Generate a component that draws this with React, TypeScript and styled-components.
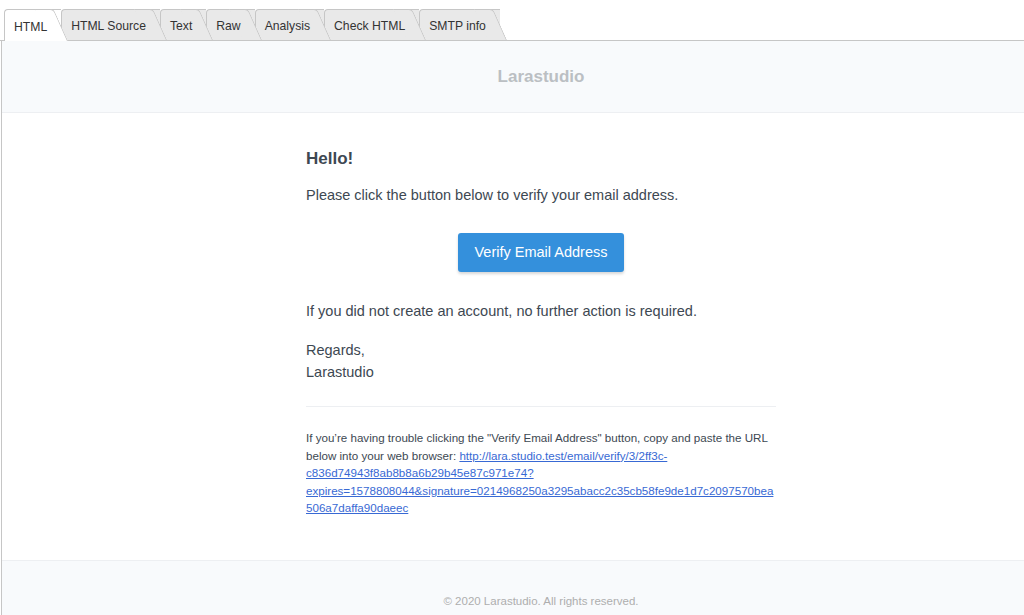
import styled, { createGlobalStyle } from "styled-components";

const TABS = ["HTML", "HTML Source", "Text", "Raw", "Analysis", "Check HTML", "SMTP info"];

const verifyUrl =
  "http://lara.studio.test/email/verify/3/2ff3c-c836d74943f8ab8b8a6b29b45e87c971e74?expires=1578808044&signature=0214968250a3295abacc2c35cb58fe9de1d7c2097570bea506a7daffa90daeec";

const App = () => {
  return (
    <Page>
      <GlobalStyle />
      <TabBar>
        {TABS.map((tab, i) => (
          <Tab key={tab} $active={i === 0} $z={TABS.length - i}>
            {tab}
          </Tab>
        ))}
      </TabBar>
      <Frame>
        <Header>
          <Logo>Larastudio</Logo>
        </Header>
        <Body>
          <Inner>
            <Title>Hello!</Title>
            <Paragraph>Please click the button below to verify your email address.</Paragraph>
            <Action>
              <Button href="#">Verify Email Address</Button>
            </Action>
            <Paragraph>If you did not create an account, no further action is required.</Paragraph>
            <Paragraph>
              Regards,
              <br />
              Larastudio
            </Paragraph>
            <Subcopy>
              If you’re having trouble clicking the "Verify Email Address" button, copy and paste
              the URL below into your web browser: <Link href="#">{verifyUrl}</Link>
            </Subcopy>
          </Inner>
        </Body>
        <Footer>© 2020 Larastudio. All rights reserved.</Footer>
      </Frame>
    </Page>
  );
};

const GlobalStyle = createGlobalStyle`
  html, body {
    margin: 0;
    padding: 0;
    background: #fff;
    overflow: hidden;
  }
  body {
    font-family: "Liberation Sans", Arial, sans-serif;
  }
`;

const Page = styled.div`
  min-height: 615px;
  width: 1080px;
`;

const TabBar = styled.div`
  display: flex;
  align-items: flex-end;
  padding: 9px 0 0 4px;
  border-bottom: 1px solid #c6c6c6;
`;

const Tab = styled.div<{ $active?: boolean; $z: number }>`
  position: relative;
  z-index: ${(p) => p.$z};
  display: flex;
  align-items: center;
  box-sizing: border-box;
  height: ${(p) => (p.$active ? 32 : 31)}px;
  margin-bottom: ${(p) => (p.$active ? -1 : 0)}px;
  padding: 2px 14px 0 9px;
  font-size: 12.2px;
  color: #333;
  background: ${(p) => (p.$active ? "#fff" : "#e9e9e9")};
  border-top: 1px solid #c6c6c6;
  border-left: 1px solid #c6c6c6;
  border-top-left-radius: 4px;

  &::after {
    content: "";
    position: absolute;
    z-index: -1;
    top: -1px;
    bottom: 0;
    right: -7px;
    width: 18px;
    background: inherit;
    border-top: 1px solid #c6c6c6;
    border-right: 1px solid #c6c6c6;
    border-top-right-radius: 4px;
    transform: skewX(24deg);
    transform-origin: bottom right;
  }
`;

const Frame = styled.div`
  margin-left: 1px;
  border-left: 1px solid #c6c6c6;
`;

const Header = styled.div`
  padding: 25px 0;
  text-align: center;
  background: #f8fafc;
  border-bottom: 1px solid #edeff2;
`;

const Logo = styled.div`
  font-size: 17px;
  line-height: 21px;
  font-weight: bold;
  color: #bbbfc3;
`;

const Body = styled.div`
  background: #fff;
  padding: 36px 0 43px;
`;

const Inner = styled.div`
  width: 470px;
  margin: 0 auto;
  color: #3d4852;
`;

const Title = styled.h1`
  margin: 0 0 15px;
  font-size: 17px;
  line-height: 20px;
  font-weight: bold;
  color: #3d4852;
`;

const Paragraph = styled.p`
  margin: 0 0 17px;
  font-size: 14.5px;
  line-height: 22px;
`;

const Action = styled.div`
  display: flex;
  justify-content: center;
  margin: 27px 0 28px;
`;

const Button = styled.a`
  display: block;
  padding: 0 17px;
  height: 39px;
  line-height: 39px;
  border-radius: 3px;
  background: #3490dc;
  color: #fff;
  font-size: 14.5px;
  text-decoration: none;
  box-shadow: 0 2px 3px rgba(0, 0, 0, 0.16);
`;

const Subcopy = styled.p`
  margin: 23px 0 0;
  padding-top: 22px;
  border-top: 1px solid #edeff2;
  font-size: 11.6px;
  line-height: 17.5px;
  color: #3d4852;
  overflow-wrap: break-word;
`;

const Link = styled.a`
  color: #3869d4;
`;

const Footer = styled.div`
  padding: 31px 0 35px;
  background: #f8fafc;
  border-top: 1px solid #edeff2;
  text-align: center;
  font-size: 11.5px;
  line-height: 18px;
  color: #aeaeae;
`;

export default App;
